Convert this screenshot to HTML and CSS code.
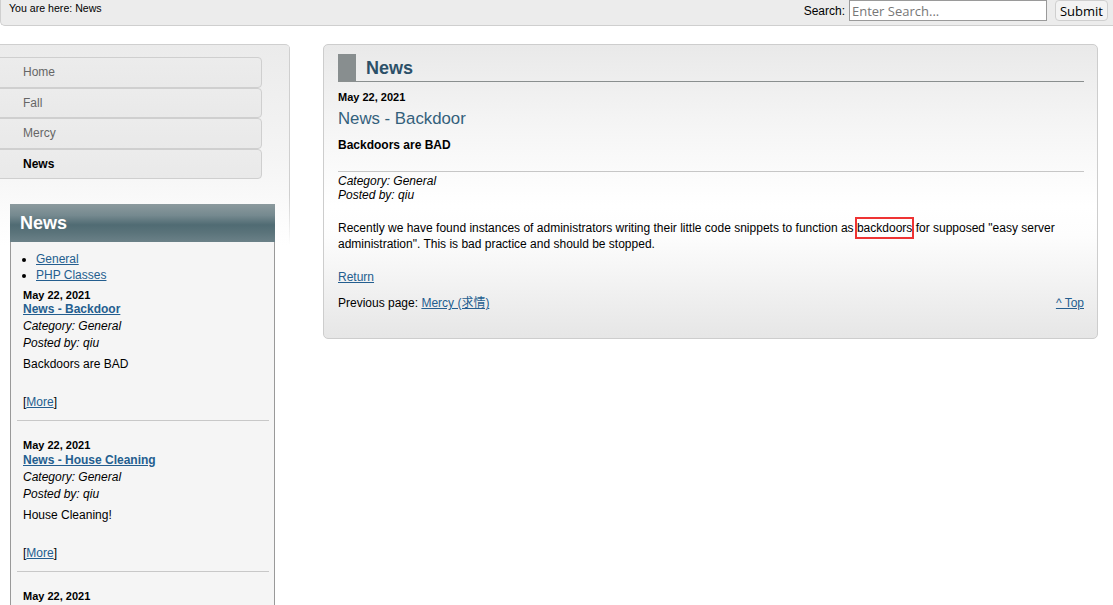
FILE: index.html
```html
<!DOCTYPE html>
<html lang="en">
<head>
<meta charset="utf-8">
<title>News</title>
<link rel="stylesheet" href="styles.css">
</head>
<body>
<div class="topbar">
  <div class="crumbs">You are here: News</div>
  <form class="search">
    <label class="search-label">Search:</label>
    <input class="search-input" type="text" placeholder="Enter Search...">
    <button class="search-btn" type="button">Submit</button>
  </form>
</div>
<div class="page">
  <aside class="leftcol">
    <ul class="menu">
      <li class="menu-item"><a class="menu-link">Home</a></li>
      <li class="menu-item"><a class="menu-link">Fall</a></li>
      <li class="menu-item"><a class="menu-link">Mercy</a></li>
      <li class="menu-item menu-item-current"><a class="menu-link">News</a></li>
    </ul>
    <div class="sidebox">
      <div class="sidebox-head">News</div>
      <div class="sidebox-body">
        <ul class="cats">
          <li><a class="link" href="#">General</a></li>
          <li><a class="link" href="#">PHP Classes</a></li>
        </ul>
        <div class="sitem">
          <div class="sdate">May 22, 2021</div>
          <a class="stitle" href="#">News - Backdoor</a>
          <div class="smeta">Category: General</div>
          <div class="smeta">Posted by: qiu</div>
          <div class="stext">Backdoors are BAD</div>
          <div class="smore">[<a class="link" href="#">More</a>]</div>
        </div>
        <hr class="ssep">
        <div class="sitem">
          <div class="sdate">May 22, 2021</div>
          <a class="stitle" href="#">News - House Cleaning</a>
          <div class="smeta">Category: General</div>
          <div class="smeta">Posted by: qiu</div>
          <div class="stext">House Cleaning!</div>
          <div class="smore">[<a class="link" href="#">More</a>]</div>
        </div>
        <hr class="ssep">
        <div class="sitem">
          <div class="sdate">May 22, 2021</div>
        </div>
      </div>
    </div>
  </aside>
  <main class="panel">
    <h1 class="panel-head"><span class="panel-mark"></span><span class="panel-title">News</span></h1>
    <div class="ndate">May 22, 2021</div>
    <h2 class="ntitle">News - Backdoor</h2>
    <div class="nsummary">Backdoors are BAD</div>
    <hr class="nsep">
    <div class="nmeta">Category: General</div>
    <div class="nmeta">Posted by: qiu</div>
    <p class="nbody">Recently we have found instances of administrators writing their little code snippets to function as <span class="mark">backdoors</span> for supposed "easy server administration". This is bad practice and should be stopped.</p>
    <div class="nreturn"><a class="link" href="#">Return</a></div>
    <div class="nfoot">
      <div>Previous page: <a class="link" href="#">Mercy (求情)</a></div>
      <a class="link" href="#">^ Top</a>
    </div>
  </main>
</div>
</body>
</html>
```
FILE: styles.css
```css
* { box-sizing: border-box; }
html, body { margin: 0; padding: 0; background: #fff; }
body {
  font-family: "Liberation Sans", Arial, "Noto Sans CJK SC", sans-serif;
  font-size: 12px;
  color: #000;
  overflow: hidden;
}
.topbar {
  height: 26px;
  display: flex;
  justify-content: space-between;
  align-items: flex-start;
  background: #ececec;
  border-bottom: 1px solid #cfcfcf;
  border-left: 1px solid #cfcfcf;
  border-bottom-left-radius: 5px;
  padding: 0 5px 0 8px;
}
.crumbs {
  font-size: 10.6px;
  line-height: 16px;
}
.search {
  display: flex;
  align-items: flex-start;
  margin: 0;
}
.search-label {
  font-size: 12px;
  line-height: 22px;
  margin-right: 4px;
}
.search-input {
  width: 198px;
  height: 21px;
  margin: 0;
  border: 1px solid #9a9a9a;
  border-radius: 0;
  padding: 0 2px;
  font-family: "Open Sans", "Noto Sans", sans-serif;
  font-size: 13px;
  background: #fff;
}
.search-input::placeholder { color: #777; }
.search-btn {
  margin: 0 0 0 8px;
  height: 21px;
  padding: 0 4px;
  border: 1px solid #cfcfcf;
  border-radius: 4px;
  background: #f3f3f3;
  font-family: "Open Sans", "Noto Sans", sans-serif;
  font-size: 13px;
  color: #000;
  line-height: 18px;
}
.page {
  display: flex;
  align-items: flex-start;
  margin-top: 18px;
  gap: 33px;
}
.leftcol {
  width: 290px;
  flex: none;
  padding-top: 12px;
  border-top: 1px solid #cfcfcf;
  border-top-right-radius: 5px;
  background:
    linear-gradient(to bottom, #cfcfcf 0, #cfcfcf 150px, rgba(207,207,207,0) 200px) right top / 1px 200px no-repeat,
    linear-gradient(to bottom, #ebebeb 0, #f4f4f4 110px, #fff 200px) left top / 100% 200px no-repeat;
}
.menu {
  list-style: none;
  margin: 0 0 0 -6px;
  padding: 0;
  width: 268px;
}
.menu-item {
  height: 30.5px;
  border: 1px solid #cfcfcf;
  border-radius: 4px;
  background: linear-gradient(#ececec, #e9e9e9);
  display: flex;
  align-items: center;
  padding-left: 28px;
}
.menu-link {
  color: #666;
  font-size: 12px;
  line-height: 14px;
}
.menu-item-current .menu-link { color: #000; font-weight: bold; }
.sidebox {
  margin: 25px 0 0 10px;
  width: 265px;
}
.sidebox-head {
  height: 38px;
  background: linear-gradient(to bottom, #8c9a9e 0%, #75898f 30%, #506b73 55%, #5a737a 75%, #6b8188 100%);
  color: #fff;
  font-weight: bold;
  font-size: 18px;
  line-height: 38px;
  padding-left: 10px;
}
.sidebox-body {
  background: #f5f5f5;
  border-left: 1px solid #999;
  border-right: 1px solid #999;
  padding: 9px 0 20px 12px;
}
.cats {
  margin: 0;
  padding-left: 13px;
  line-height: 16px;
}
.link { color: #245e8f; text-decoration: underline; }
.sitem { padding-top: 6px; }
.sdate { font-size: 11px; font-weight: bold; line-height: 13px; }
.stitle {
  display: block;
  font-weight: bold;
  color: #245e8f;
  text-decoration: underline;
  line-height: 14px;
}
.smeta { font-style: italic; line-height: 17px; }
.stitle + .smeta { margin-top: 2px; }
.stext { line-height: 16px; margin-top: 4px; }
.smore { line-height: 16px; margin-top: 22px; }
.ssep {
  border: 0;
  border-top: 1px solid #c8c8c8;
  margin: 10px 5px 12px -6px;
}
.ssep + .sitem .stitle { margin-top: 1px; }
.panel {
  width: 775px;
  flex: none;
  border: 1px solid #cdcdcd;
  border-radius: 5px;
  background: linear-gradient(to bottom, #e9e9e9 0%, #f6f6f6 30%, #fff 55%, #fdfdfd 65%, #e6e6e6 100%);
  padding: 9px 13px 27px 14px;
}
.panel-head {
  display: flex;
  align-items: stretch;
  margin: 0;
  height: 28px;
  border-bottom: 1px solid #8a8f8f;
}
.panel-mark {
  width: 18px;
  background: #888e8f;
}
.panel-title {
  font-size: 18px;
  font-weight: bold;
  color: #2c5068;
  line-height: 28px;
  padding-left: 10px;
}
.ndate { font-size: 11px; font-weight: bold; line-height: 13px; margin-top: 9px; }
.ntitle {
  margin: 5px 0 0;
  font-size: 16.8px;
  font-weight: normal;
  color: #33607b;
  line-height: 20px;
}
.nsummary { font-weight: bold; line-height: 14px; margin-top: 9px; }
.nsep {
  border: 0;
  border-top: 1px solid #c6c6c6;
  margin: 19px 0 2px;
}
.nmeta { font-style: italic; line-height: 14px; }
.nbody { margin: 18px 0 0; line-height: 16px; }
.mark {
  outline: 2px solid #ee3333;
  padding: 2px 0;
}
.nreturn { margin-top: 17px; line-height: 16px; }
.nfoot {
  margin-top: 10px;
  display: flex;
  justify-content: space-between;
  line-height: 16px;
}
```
